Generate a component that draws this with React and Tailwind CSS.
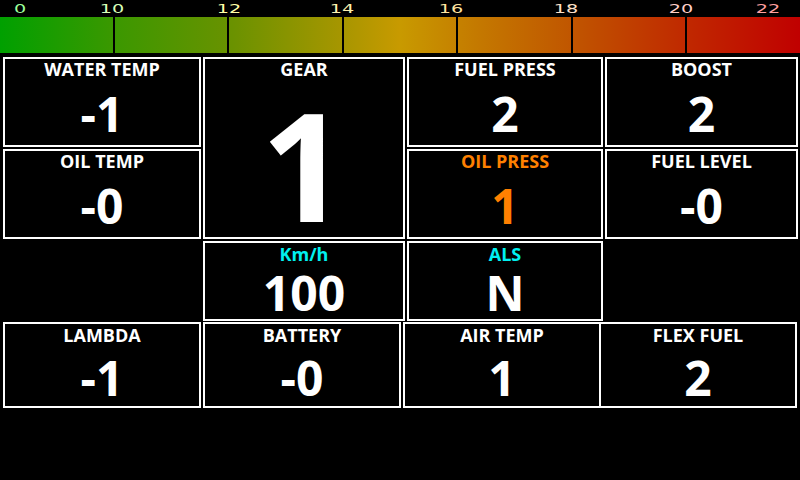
const ticks = [
  { label: "0", x: 20, color: "text-[#9cff9c]" },
  { label: "10", x: 112, color: "text-[#d8ffb8]" },
  { label: "12", x: 229, color: "text-[#ffffa8]" },
  { label: "14", x: 342, color: "text-[#fff2b0]" },
  { label: "16", x: 451, color: "text-[#ffe4a0]" },
  { label: "18", x: 566, color: "text-[#ffe0c8]" },
  { label: "20", x: 681, color: "text-[#ffd0c8]" },
  { label: "22", x: 768, color: "text-[#ffa0a0]" },
];

const Gauge = ({ label, value, className = "", titleClass = "text-white", valueClass = "text-white", pad = "pt-0", gap = "mt-[11px]" }) => (
  <div className={`flex flex-col items-center border-2 border-white bg-black ${pad} ${className}`}>
    <div className={`text-[18px] leading-[20px] font-bold whitespace-nowrap ${titleClass}`}>{label}</div>
    <div className={`text-[48px] leading-[48px] font-bold ${gap} ${valueClass}`}>{value}</div>
  </div>
);

export default function App() {
  return (
    <div className="w-[800px] h-[480px] bg-black overflow-hidden font-['Open_Sans','Noto_Sans',sans-serif]">
      {/* RPM scale labels */}
      <div className="relative h-[17px] font-['DejaVu_Sans',sans-serif]">
        {ticks.map((t) => (
          <span
            key={t.label}
            className={`absolute top-[1px] -translate-x-1/2 text-[12px] leading-[16px] font-normal ${t.color}`}
            style={{ left: t.x }}
          >
            <span className="inline-block scale-x-[1.6]">{t.label}</span>
          </span>
        ))}
      </div>

      {/* RPM bar */}
      <div className="flex h-[36px] bg-[linear-gradient(to_right,#00a000,#3a9800_14%,#6a9200_29%,#a89600_43%,#c89a00_50%,#c47800_60%,#c05400_72%,#c02800_86%,#c00000)]">
        <div className="flex-1" />
        <div className="flex-1 border-l-2 border-black" />
        <div className="flex-1 border-l-2 border-black" />
        <div className="flex-1 border-l-2 border-black" />
        <div className="flex-1 border-l-2 border-black" />
        <div className="flex-1 border-l-2 border-black" />
        <div className="flex-1 border-l-2 border-black" />
      </div>

      {/* Gauges */}
      <div className="mt-[4px] ml-[3px] grid grid-cols-[198px_202px_196px_193px] grid-rows-[90px_90px_80px] gap-[2px]">
        <Gauge label="WATER TEMP" value="-1" className="col-start-1 row-start-1" />
        <div className="col-start-2 row-start-1 row-span-2 flex flex-col items-center border-2 border-white">
          <div className="text-[18px] leading-[20px] font-bold text-white">GEAR</div>
          <div className="text-[150px] leading-[108px] font-bold text-white mt-[31px]">1</div>
        </div>
        <Gauge label="FUEL PRESS" value="2" className="col-start-3 row-start-1" />
        <Gauge label="BOOST" value="2" className="col-start-4 row-start-1" />

        <Gauge label="OIL TEMP" value="-0" className="col-start-1 row-start-2" />
        <Gauge label="OIL PRESS" value="1" className="col-start-3 row-start-2" titleClass="text-[#ff8000]" valueClass="text-[#ff8000]" />
        <Gauge label="FUEL LEVEL" value="-0" className="col-start-4 row-start-2" />

        <Gauge label="Km/h" value="100" className="col-start-2 row-start-3" titleClass="text-[#00f0f0]" pad="pt-[1px]" gap="mt-[5px]" />
        <Gauge label="ALS" value="N" className="col-start-3 row-start-3" titleClass="text-[#00f0f0]" pad="pt-[1px]" gap="mt-[5px]" />
      </div>

      <div className="mt-[1px] ml-[3px] flex gap-[2px] h-[86px]">
        <Gauge label="LAMBDA" value="-1" className="w-[198px]" pad="pt-[1px]" gap="mt-[9px]" />
        <Gauge label="BATTERY" value="-0" className="w-[198px]" pad="pt-[1px]" gap="mt-[9px]" />
        <Gauge label="AIR TEMP" value="1" className="w-[198px]" pad="pt-[1px]" gap="mt-[9px]" />
        <Gauge label="FLEX FUEL" value="2" className="w-[198px] -ml-[4px]" pad="pt-[1px]" gap="mt-[9px]" />
      </div>
    </div>
  );
}
